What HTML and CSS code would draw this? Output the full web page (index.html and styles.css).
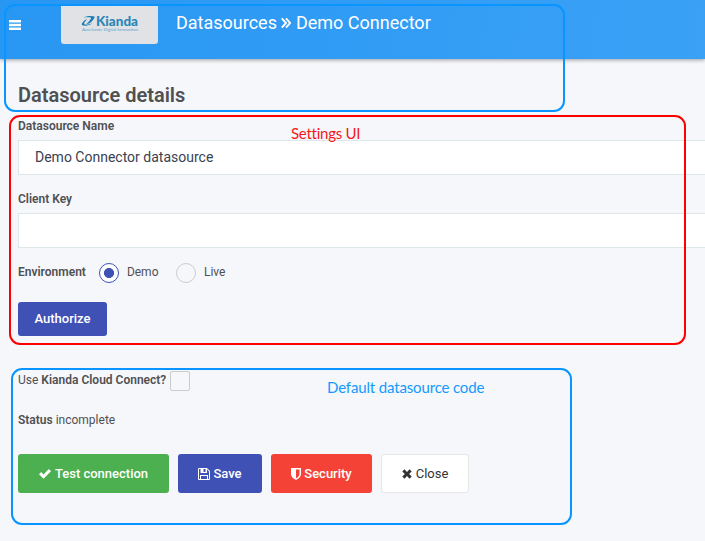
FILE: index.html
```html
<!DOCTYPE html>
<html lang="en">
<head>
<meta charset="utf-8">
<title>Datasource details</title>
<link rel="stylesheet" href="styles.css">
</head>
<body>
<header class="topbar">
  <svg class="menu" viewBox="0 0 12 10"><path d="M0 0h12v2.5H0zM0 3.75h12v2.5H0zM0 7.5h12v2.5H0z"/></svg>
  <div class="logo">
    <svg viewBox="0 0 97 38">
      <path class="mark" d="M22 11.5C25 9.7 31 9.5 33.5 10.4C34.5 11.8 30 16.5 28 17.6L25.5 18C28 16 30.5 12.5 30 11.6C28 11 24 11.2 22 11.5ZM26.4 13.2C24 15 22.5 17.5 23.5 18.4C26 18.8 29 18.3 31.5 17.2C29 19.6 23 20.3 21 19C20 17.6 23.5 13.4 26.4 13.2Z"/>
      <text class="brand" x="35" y="19.7" textLength="42" lengthAdjust="spacingAndGlyphs">Kianda</text>
      <text class="tag" x="21" y="25.2" textLength="56" lengthAdjust="spacingAndGlyphs">Accelerate Digital Innovation</text>
    </svg>
  </div>
  <div class="crumbs"><span>Datasources</span><svg viewBox="0 0 10 12"><path d="M.8 1.3L5 6L.8 10.7M5 1.3L9.2 6L5 10.7"/></svg><span>Demo Connector</span></div>
</header>
<main>
  <h1><span>Datasource details</span></h1>
  <label class="label name">Datasource Name</label>
  <div class="field">Demo Connector datasource</div>
  <label class="label key">Client Key</label>
  <div class="field"></div>
  <div class="environment">
    <b>Environment</b><i class="radio on"></i><span>Demo</span><i class="radio"></i><span>Live</span>
  </div>
  <button class="btn authorize">Authorize</button>
  <div class="cloud"><span>Use <b>Kianda Cloud Connect?</b></span><i class="check"></i></div>
  <div class="status"><b>Status</b> incomplete</div>
  <div class="actions">
    <button class="btn test"><svg viewBox="0 0 12 10"><path d="M0 5.3L2.2 3.1L4.5 5.4L9.8.1L12 2.3L4.5 9.8Z"/></svg><span>Test connection</span></button>
    <button class="btn save"><svg viewBox="0 0 12 12"><path fill-rule="evenodd" d="M.8 0H9L12 3V11.2L11.2 12H.8L0 11.2V.8ZM1 1V11H2V7H10V11H11V3.4L9 1.2V5H2.5V1ZM5.5 1V4H7.5V1ZM3 8V11H9V8Z"/></svg><span>Save</span></button>
    <button class="btn security"><svg viewBox="0 0 10 12"><path fill-rule="evenodd" d="M0 0H10V6C10 9 7 11 5 12C3 11 0 9 0 6ZM5 1.6V10.3C7 9.2 8.5 7.8 8.5 6V1.6Z"/></svg><span>Security</span></button>
    <button class="btn close"><svg viewBox="0 0 10 10"><path d="M2.4 .3L5 2.9L7.6.3L9.7 2.4L7.1 5L9.7 7.6L7.6 9.7L5 7.1L2.4 9.7L.3 7.6L2.9 5L.3 2.4Z"/></svg><span>Close</span></button>
  </div>
</main>
<div class="note note-header"></div>
<div class="note note-settings"><span>Settings UI</span></div>
<div class="note note-default"><span>Default datasource code</span></div>
</body>
</html>
```
FILE: styles.css
```css
* { box-sizing: border-box; }
body {
  margin: 0;
  width: 705px;
  height: 541px;
  overflow: hidden;
  position: relative;
  background: #f5f7fb;
  color: #4f5052;
  font: 12px/18px Roboto, sans-serif;
}
b { font-weight: 600; }
.topbar {
  height: 59px;
  display: flex;
  align-items: flex-start;
  padding: 6px 9px 0;
  background: linear-gradient(100deg, #2897f3, #3aa1f6);
  box-shadow: 0 1px 4px rgba(0, 0, 0, .38);
}
.menu { width: 12px; height: 10px; margin: 14px 40px 0 0; fill: #fff; }
.logo { width: 97px; height: 38px; border-radius: 0 0 3px 3px; background: #e0e2e5; }
.logo svg { display: block; }
.mark { fill: #167db4; }
.brand { font: 900 12.5px Lato, sans-serif; fill: #2c87b7; }
.tag { font: 4.5px Lato, sans-serif; fill: #5ba4cc; }
.crumbs {
  display: flex;
  align-items: center;
  height: 34px;
  margin-left: 18px;
  color: #fff;
  font-size: 18px;
}
.crumbs svg { width: 10px; height: 12px; margin: 0 5px 0 4px; fill: none; stroke: #fff; stroke-width: 1.9; }
main { padding: 22px 0 0 18px; }
h1 { margin: 0; height: 28px; font-size: 20px; line-height: 28px; font-weight: 600; }
.label { display: block; font-weight: 600; }
.name { margin: 8px 0 5px; }
.key { margin: 15px 0 5px; }
.field {
  width: 710px;
  height: 35px;
  padding: 0 16px;
  border: 1px solid #dde6e9;
  background: #fff;
  color: #3a3f51;
  font-size: 14px;
  line-height: 33px;
}
.environment { display: flex; align-items: center; height: 20px; margin-top: 15px; }
.environment b, .environment span { margin-top: -2px; }
.radio { width: 20px; height: 20px; border: 1px solid #ccc; border-radius: 50%; margin: 0 8px 0 17.5px; }
.radio.on { border-color: #3f51b5; margin-left: 13px; background: radial-gradient(circle, #3f51b5 4.7px, #fff 5.3px); }
.btn {
  display: flex;
  align-items: center;
  justify-content: center;
  padding: 0;
  border: 0;
  border-radius: 3px;
  color: #fff;
  font: 500 13px Roboto, sans-serif;
}
.btn svg { fill: currentColor; margin-right: 4px; }
.authorize { width: 89px; height: 34px; padding-bottom: 2px; margin-top: 19px; background: #3f51b5; }
.cloud { display: flex; align-items: center; gap: 4px; height: 20px; margin-top: 35px; }
.cloud span { margin-top: -2px; }
.check { width: 20px; height: 20px; border: 1px solid #ccc; border-radius: 2px; }
.status { margin-top: 20px; }
.actions { display: flex; gap: 9px; margin-top: 25px; }
.actions .btn { height: 39px; }
.test { width: 151px; background: #4caf50; }
.test svg { width: 12px; height: 10px; }
.save { width: 84px; background: #3f51b5; }
.save svg { width: 12px; height: 12px; margin-right: 3px; }
.security { width: 101px; background: #f44336; }
.security svg { width: 10px; height: 12px; margin-right: 3px; }
.close.btn { width: 88px; border: 1px solid #e6e6e6; background: #fff; color: #333; font-weight: 400; }
.close svg { width: 10px; height: 10px; }
.note { position: absolute; border: 2px solid #0895ff; border-radius: 11px; font: 15px/18px Lato, sans-serif; letter-spacing: -.15px; white-space: nowrap; }
.note span { position: absolute; }
.note-header { left: 4px; top: 4px; width: 561px; height: 108px; }
.note-settings { left: 9px; top: 115px; width: 677px; height: 230px; border-color: #f00; color: #f51717; }
.note-settings span { left: 280px; top: 7px; letter-spacing: -.25px; }
.note-default { left: 11px; top: 368px; width: 561px; height: 157px; color: #149aff; }
.note-default span { left: 314px; top: 8px; }
```
